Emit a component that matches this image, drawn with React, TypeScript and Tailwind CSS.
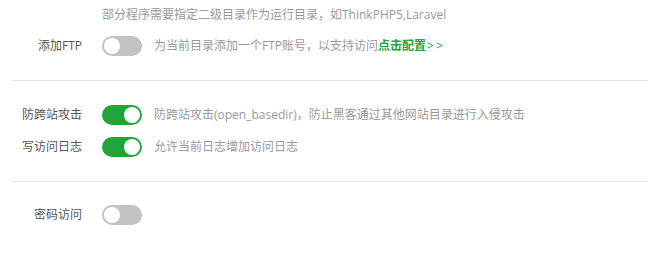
import React from 'react'

function Toggle({ on }: { on: boolean }) {
  return (
    <span
      className={
        on
          ? 'relative inline-block w-[40px] h-[20px] rounded-full bg-[#20a53a] shrink-0'
          : 'relative inline-block w-[40px] h-[20px] rounded-full bg-[#c2c2c2] shrink-0'
      }
    >
      <span
        className={
          on
            ? 'absolute top-[2px] right-[2px] w-[16px] h-[16px] rounded-full bg-white'
            : 'absolute top-[2px] left-[2px] w-[16px] h-[16px] rounded-full bg-white'
        }
      />
    </span>
  )
}

function Row({
  label,
  on,
  children,
}: {
  label: string
  on: boolean
  children: React.ReactNode
}) {
  return (
    <div className="flex items-center h-[32px]">
      <div className="w-[82px] text-right text-[12px] text-[#555]">{label}</div>
      <div className="ml-[20px] flex items-center">
        <Toggle on={on} />
      </div>
      <div className="ml-[12px] text-[12px] text-[#999]">{children}</div>
    </div>
  )
}

export default function App() {
  return (
    <div
      className="w-[648px] h-[254px] bg-white"
      style={{ fontFamily: '"Open Sans", "Noto Sans CJK SC", sans-serif' }}
    >
      <div className="h-[30px] flex items-center pl-[102px] text-[12px] text-[#999]">
        部分程序需要指定二级目录作为运行目录，如ThinkPHP5,Laravel
      </div>
      <Row label="添加FTP" on={false}>
        为当前目录添加一个FTP账号，以支持访问
        <span className="text-[#20a53a] font-semibold">点击配置</span>
        <span className="text-[#20a53a] tracking-[2px] pl-[1px]">&gt;&gt;</span>
      </Row>
      <div className="ml-[12px] mt-[18px] h-px bg-[#e1e3ea]" />
      <div className="mt-[18px]">
        <Row label="防跨站攻击" on={true}>
          防跨站攻击(open_basedir)，防止黑客通过其他网站目录进行入侵攻击
        </Row>
        <Row label="写访问日志" on={true}>
          允许当前日志增加访问日志
        </Row>
      </div>
      <div className="ml-[12px] mt-[18px] h-px bg-[#e4e4e4]" />
      <div className="mt-[17px]">
        <Row label="密码访问" on={false}>
          {null}
        </Row>
      </div>
    </div>
  )
}
